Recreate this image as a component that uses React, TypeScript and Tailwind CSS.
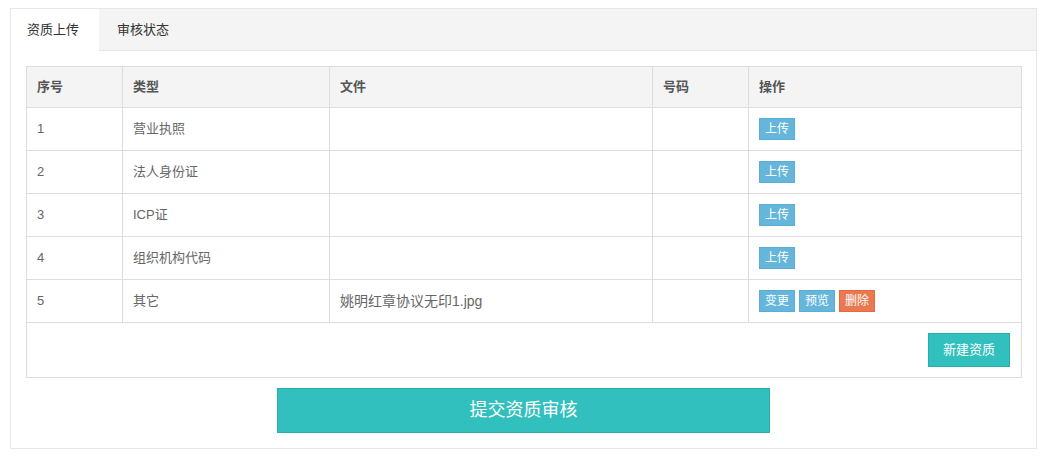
import React from "react";

interface Row {
  no: number;
  type: string;
  file: string;
  code: string;
  actions: string[];
}

const rows: Row[] = [
  { no: 1, type: "营业执照", file: "", code: "", actions: ["上传"] },
  { no: 2, type: "法人身份证", file: "", code: "", actions: ["上传"] },
  { no: 3, type: "ICP证", file: "", code: "", actions: ["上传"] },
  { no: 4, type: "组织机构代码", file: "", code: "", actions: ["上传"] },
  { no: 5, type: "其它", file: "姚明红章协议无印1.jpg", code: "", actions: ["变更", "预览", "删除"] },
];

const font = { fontFamily: '"Liberation Sans", Arial, "Noto Sans CJK SC", sans-serif' };

const ActionButton: React.FC<{ label: string }> = ({ label }) => {
  const danger = label === "删除";
  return (
    <button
      className={
        danger
          ? "h-[22px] w-[36px] border border-[#e6683f] bg-[#ea7851] text-[12px] leading-[20px] text-white"
          : "h-[22px] w-[36px] border border-[#5aaed6] bg-[#65b6da] text-[12px] leading-[20px] text-white"
      }
    >
      {label}
    </button>
  );
};

export default function App() {
  return (
    <div className="bg-white pt-2 pl-[10px] w-[1046px] h-[456px]" style={font}>
      <div className="w-[1027px] h-[441px] border border-[#e6e6e6]">
        {/* Tabs */}
        <div className="flex h-[42px] bg-[#f4f4f4] border-b border-[#e6e6e6]">
          <div className="w-[88px] h-[42px] bg-white pl-[16px] text-[13px] leading-[41px] text-[#333]">
            资质上传
          </div>
          <div className="pl-[18px] text-[13px] leading-[41px] text-[#333]">审核状态</div>
        </div>

        <div className="px-[15px] pt-[15px]">
          <table className="w-[995px] table-fixed border-collapse text-[13px] text-[#666]">
            <colgroup>
              <col className="w-[96px]" />
              <col className="w-[207px]" />
              <col className="w-[323px]" />
              <col className="w-[96px]" />
              <col className="w-[273px]" />
            </colgroup>
            <thead>
              <tr className="h-[41px] bg-[#f4f4f4]">
                {["序号", "类型", "文件", "号码", "操作"].map((h) => (
                  <th
                    key={h}
                    className="border border-[#dddddd] px-[10px] text-left font-bold text-[#555]"
                  >
                    {h}
                  </th>
                ))}
              </tr>
            </thead>
            <tbody>
              {rows.map((r) => (
                <tr key={r.no} className="h-[43px]">
                  <td className="border border-[#dddddd] px-[10px]">{r.no}</td>
                  <td className="border border-[#dddddd] px-[10px]">{r.type}</td>
                  <td className="border border-[#dddddd] px-[10px] text-[14px]">{r.file}</td>
                  <td className="border border-[#dddddd] px-[10px]">{r.code}</td>
                  <td className="border border-[#dddddd] px-[10px]">
                    <div className="flex gap-1">
                      {r.actions.map((a) => (
                        <ActionButton key={a} label={a} />
                      ))}
                    </div>
                  </td>
                </tr>
              ))}
              <tr className="h-[55px]">
                <td colSpan={5} className="border border-[#dddddd] pr-[11px]">
                  <div className="flex justify-end">
                    <button className="h-[34px] w-[82px] border border-[#2aaeab] bg-[#31c0bd] text-[13px] text-white">
                      新建资质
                    </button>
                  </div>
                </td>
              </tr>
            </tbody>
          </table>

          <div className="flex justify-center pt-[10px]">
            <button className="h-[45px] w-[493px] border border-[#2aaeab] bg-[#31c0bd] text-[18px] text-white">
              提交资质审核
            </button>
          </div>
        </div>
      </div>
    </div>
  );
}
